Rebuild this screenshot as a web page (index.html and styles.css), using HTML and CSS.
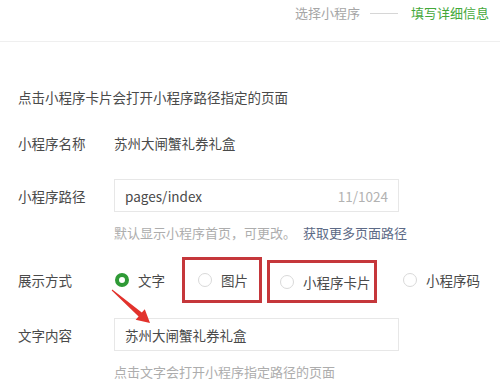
FILE: index.html
```html
<!DOCTYPE html>
<html lang="zh-CN">
<head>
    <meta charset="UTF-8">
    <title>填写详细信息</title>
    <link rel="stylesheet" href="styles.css">
</head>
<body>
<div class="page">
    <!-- 步骤条 -->
    <div class="steps">
        <span class="step">选择小程序</span>
        <span class="step-line"></span>
        <span class="step active">填写详细信息</span>
    </div>

    <p class="intro">点击小程序卡片会打开小程序路径指定的页面</p>

    <div class="row row-name">
        <span class="label">小程序名称</span>
        <span class="value">苏州大闸蟹礼券礼盒</span>
    </div>

    <div class="row row-path">
        <span class="label">小程序路径</span>
        <div class="input">
            <span>pages/index</span>
            <span class="count">11/1024</span>
        </div>
    </div>
    <p class="hint">默认显示小程序首页，可更改。 <a class="link">获取更多页面路径</a></p>

    <div class="row row-mode">
        <span class="label">展示方式</span>
        <div class="radios">
            <label class="opt opt-text"><i class="radio checked"></i>文字</label>
            <label class="opt opt-pic marked"><i class="radio"></i>图片</label>
            <label class="opt opt-card marked"><i class="radio"></i>小程序卡片</label>
            <label class="opt opt-code"><i class="radio"></i>小程序码</label>
        </div>
    </div>

    <div class="row row-content">
        <span class="label">文字内容</span>
        <div class="input">
            <span>苏州大闸蟹礼券礼盒</span>
        </div>
    </div>
    <p class="hint">点击文字会打开小程序指定路径的页面</p>

    <!-- 标注箭头 -->
    <svg class="arrow" width="60" height="50" viewBox="0 0 60 50">
        <polygon points="11.7,10.4 12.3,9.6 41.8,32.6 44.8,29.2 50,43 35.6,39.8 38.6,36.4" fill="#e2322c"/>
    </svg>
</div>
</body>
</html>
```

FILE: styles.css
```css
body { margin: 0; background: #fff; font-family: "Noto Sans CJK SC", "Noto Sans", sans-serif; font-size: 13.5px; color: #4a4a4a; }
.page { position: relative; width: 500px; height: 382px; overflow: hidden; }
.steps { height: 42px; border-bottom: 1px solid #efefef; display: flex; justify-content: flex-end; padding: 3px 11px 0 0; box-sizing: border-box; }
.step { color: #a6a6a6; line-height: 20px; font-size: 13px; }
.step.active { color: #44a83a; }
.step-line { width: 28px; height: 1px; background: #d6d6d6; margin: 10px 13px 0 10px; }
.intro { margin: 45px 0 0 18px; line-height: 20px; }
.row { display: grid; grid-template-columns: 96px auto; align-items: center; padding-left: 18px; }
.label { line-height: 20px; }
.value { line-height: 20px; }
.row-name { margin-top: 26px; }
.row-path { margin-top: 26px; }
.input { width: 285px; height: 33px; box-sizing: border-box; border: 1px solid #e7e7e7; display: flex; align-items: center; justify-content: space-between; padding: 0 10px; }
.count { color: #b2b2b2; }
.hint { margin: 11px 0 0 114px; line-height: 20px; color: #adadad; font-size: 13px; }
.link { color: #5d6a86; margin-left: 4px; }
.row-mode { margin-top: 14px; }
.radios { display: flex; align-items: center; height: 46px; }
.opt { display: flex; align-items: center; box-sizing: border-box; }
.radio { width: 14px; height: 14px; border-radius: 50%; border: 1px solid #d9d9d9; box-sizing: border-box; margin-right: 9px; }
.radio.checked { border: 4px solid #2f9a36; }
.opt-text { margin-left: 1px; width: 67px; }
.marked { border: 3px solid #c5373b; height: 46px; }
.opt-pic { width: 80px; padding-left: 13px; }
.opt-card { width: 110px; margin-left: 5px; padding-left: 10px; height: 43px; align-self: flex-end; }
.opt-code { margin-left: 26px; }
.row-content { margin-top: 15px; }
.arrow { position: absolute; left: 100px; top: 280px; }
```
